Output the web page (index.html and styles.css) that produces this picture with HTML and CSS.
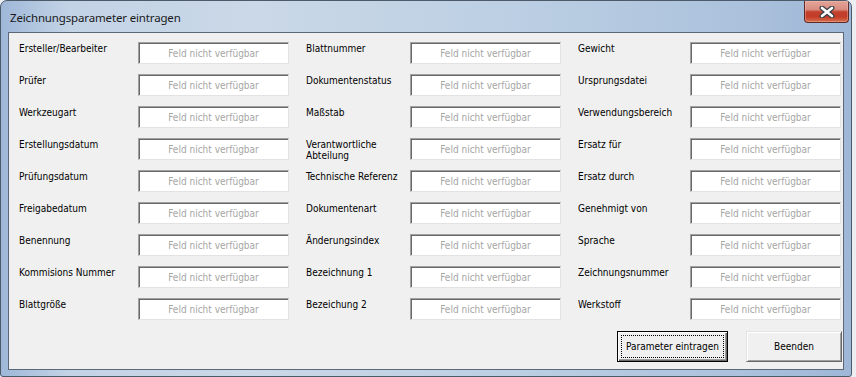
FILE: index.html
```html
<!DOCTYPE html>
<html lang="de">
<head>
    <meta charset="UTF-8">
    <title>Zeichnungsparameter eintragen</title>
    <link rel="stylesheet" href="styles.css">
</head>
<body>
    <div class="fenster">
        <!-- Titelleiste -->
        <div class="titelleiste">
            <span class="titel">Zeichnungsparameter eintragen</span>
            <div class="schliessen">
                <svg width="16" height="12" viewBox="0 0 16 12">
                    <path d="M3 2 L13 10 M13 2 L3 10" stroke="#3a3f48" stroke-width="5" stroke-linecap="round"/>
                    <path d="M3 2 L13 10 M13 2 L3 10" stroke="#ffffff" stroke-width="2.6" stroke-linecap="round"/>
                </svg>
            </div>
        </div>

        <!-- Formular -->
        <div class="inhalt">
            <div class="raster">
                <div class="feld"><label>Ersteller/Bearbeiter</label><input placeholder="Feld nicht verfügbar"></div>
                <div class="feld"><label>Blattnummer</label><input placeholder="Feld nicht verfügbar"></div>
                <div class="feld"><label>Gewicht</label><input placeholder="Feld nicht verfügbar"></div>

                <div class="feld"><label>Prüfer</label><input placeholder="Feld nicht verfügbar"></div>
                <div class="feld"><label>Dokumentenstatus</label><input placeholder="Feld nicht verfügbar"></div>
                <div class="feld"><label>Ursprungsdatei</label><input placeholder="Feld nicht verfügbar"></div>

                <div class="feld"><label>Werkzeugart</label><input placeholder="Feld nicht verfügbar"></div>
                <div class="feld"><label>Maßstab</label><input placeholder="Feld nicht verfügbar"></div>
                <div class="feld"><label>Verwendungsbereich</label><input placeholder="Feld nicht verfügbar"></div>

                <div class="feld"><label>Erstellungsdatum</label><input placeholder="Feld nicht verfügbar"></div>
                <div class="feld"><label class="schmal">Verantwortliche Abteilung</label><input placeholder="Feld nicht verfügbar"></div>
                <div class="feld"><label>Ersatz für</label><input placeholder="Feld nicht verfügbar"></div>

                <div class="feld"><label>Prüfungsdatum</label><input placeholder="Feld nicht verfügbar"></div>
                <div class="feld"><label>Technische Referenz</label><input placeholder="Feld nicht verfügbar"></div>
                <div class="feld"><label>Ersatz durch</label><input placeholder="Feld nicht verfügbar"></div>

                <div class="feld"><label>Freigabedatum</label><input placeholder="Feld nicht verfügbar"></div>
                <div class="feld"><label>Dokumentenart</label><input placeholder="Feld nicht verfügbar"></div>
                <div class="feld"><label>Genehmigt von</label><input placeholder="Feld nicht verfügbar"></div>

                <div class="feld"><label>Benennung</label><input placeholder="Feld nicht verfügbar"></div>
                <div class="feld"><label>Änderungsindex</label><input placeholder="Feld nicht verfügbar"></div>
                <div class="feld"><label>Sprache</label><input placeholder="Feld nicht verfügbar"></div>

                <div class="feld"><label>Kommisions Nummer</label><input placeholder="Feld nicht verfügbar"></div>
                <div class="feld"><label>Bezeichnung 1</label><input placeholder="Feld nicht verfügbar"></div>
                <div class="feld"><label>Zeichnungsnummer</label><input placeholder="Feld nicht verfügbar"></div>

                <div class="feld"><label>Blattgröße</label><input placeholder="Feld nicht verfügbar"></div>
                <div class="feld"><label>Bezeichung 2</label><input placeholder="Feld nicht verfügbar"></div>
                <div class="feld"><label>Werkstoff</label><input placeholder="Feld nicht verfügbar"></div>
            </div>

            <div class="knoepfe">
                <button class="knopf standard"><span>Parameter eintragen</span></button>
                <button class="knopf beenden"><span>Beenden</span></button>
            </div>
        </div>
    </div>
</body>
</html>
```

FILE: styles.css
```css
* {
    margin: 0;
    padding: 0;
    box-sizing: border-box;
}

body {
    background-color: #eceef1;
    font-family: "DejaVu Sans Condensed", "DejaVu Sans", sans-serif;
    font-stretch: condensed;
    font-size: 10px;
    color: #000;
}

/* Fensterrahmen */
.fenster {
    width: 852px;
    height: 377px;
    display: flex;
    flex-direction: column;
    border: 1px solid #4d5a6a;
    border-radius: 7px 7px 3px 3px;
    background: linear-gradient(to right, #9fb8d8 0%, #c3d3e6 8%, #cad8e7 30%, #bccfe3 60%, #adc3dd 85%, #9fb7d7 100%);
    overflow: hidden;
}

.titelleiste {
    height: 31px;
    display: flex;
    padding-left: 9px;
    padding-right: 2px;
}

.titel {
    font-family: "Noto Sans", "Open Sans", sans-serif;
    font-stretch: normal;
    font-size: 11.5px;
    letter-spacing: -0.15px;
    line-height: 20px;
    padding-top: 7px;
    color: #1a1a1a;
}

.schliessen {
    margin-left: auto;
    width: 45px;
    height: 22px;
    border: 1px solid #5e2c27;
    border-top: none;
    border-radius: 0 0 4px 4px;
    background: linear-gradient(#e3a499 0%, #d98d80 40%, #c2402d 52%, #c33d28 75%, #d6704f 100%);
    display: flex;
    justify-content: center;
    align-items: center;
    box-shadow: inset 0 0 0 1px rgba(255, 200, 190, 0.35);
}

/* Innenbereich */
.inhalt {
    flex: 1;
    margin: 0 7px 6px 7px;
    background-color: #f0f0f0;
    border: 1px solid #5b6878;
    padding: 9px 1px 0 10px;
    display: flex;
    flex-direction: column;
}

.raster {
    display: grid;
    grid-template-columns: 270px 255px 263px;
    column-gap: 17px;
    row-gap: 10px;
}

.feld {
    display: flex;
    height: 22px;
}

.feld label {
    flex: 1;
    padding-top: 1px;
    line-height: 11px;
    color: #000;
}

.feld label.schmal {
    padding-right: 30px;
}

.feld input {
    width: 151px;
    height: 22px;
    background-color: #fff;
    border-top: 1px solid #a0a0a0;
    border-left: 1px solid #a0a0a0;
    border-right: 1px solid #e3e3e3;
    border-bottom: 1px solid #e3e3e3;
    box-shadow: inset 1px 1px 0 #696969;
    font-family: inherit;
    font-stretch: condensed;
    font-size: 10px;
    text-align: center;
    outline: none;
}

.feld input::placeholder {
    color: #a6a6a6;
}

/* Knoepfe */
.knoepfe {
    display: flex;
    justify-content: flex-end;
    gap: 18px;
    margin-top: 11px;
}

.knopf {
    height: 31px;
    background-color: #f0f0f0;
    font-family: inherit;
    font-stretch: condensed;
    font-size: 10px;
    color: #000;
    border-top: 1px solid #e3e3e3;
    border-left: 1px solid #e3e3e3;
    border-right: 1px solid #696969;
    border-bottom: 1px solid #696969;
    box-shadow: inset 1px 1px 0 #fff, inset -1px -1px 0 #a0a0a0;
    padding: 3px;
    display: flex;
}

.knopf span {
    flex: 1;
    display: flex;
    align-items: center;
    justify-content: center;
    border: 1px dotted transparent;
}

.standard {
    width: 111px;
    border: 1px solid #000;
    box-shadow: inset 1px 1px 0 #fff, inset -1px -1px 0 #696969, inset -2px -2px 0 #a0a0a0;
}

.standard span {
    border-color: #000;
}

.beenden {
    width: 96px;
}
```
